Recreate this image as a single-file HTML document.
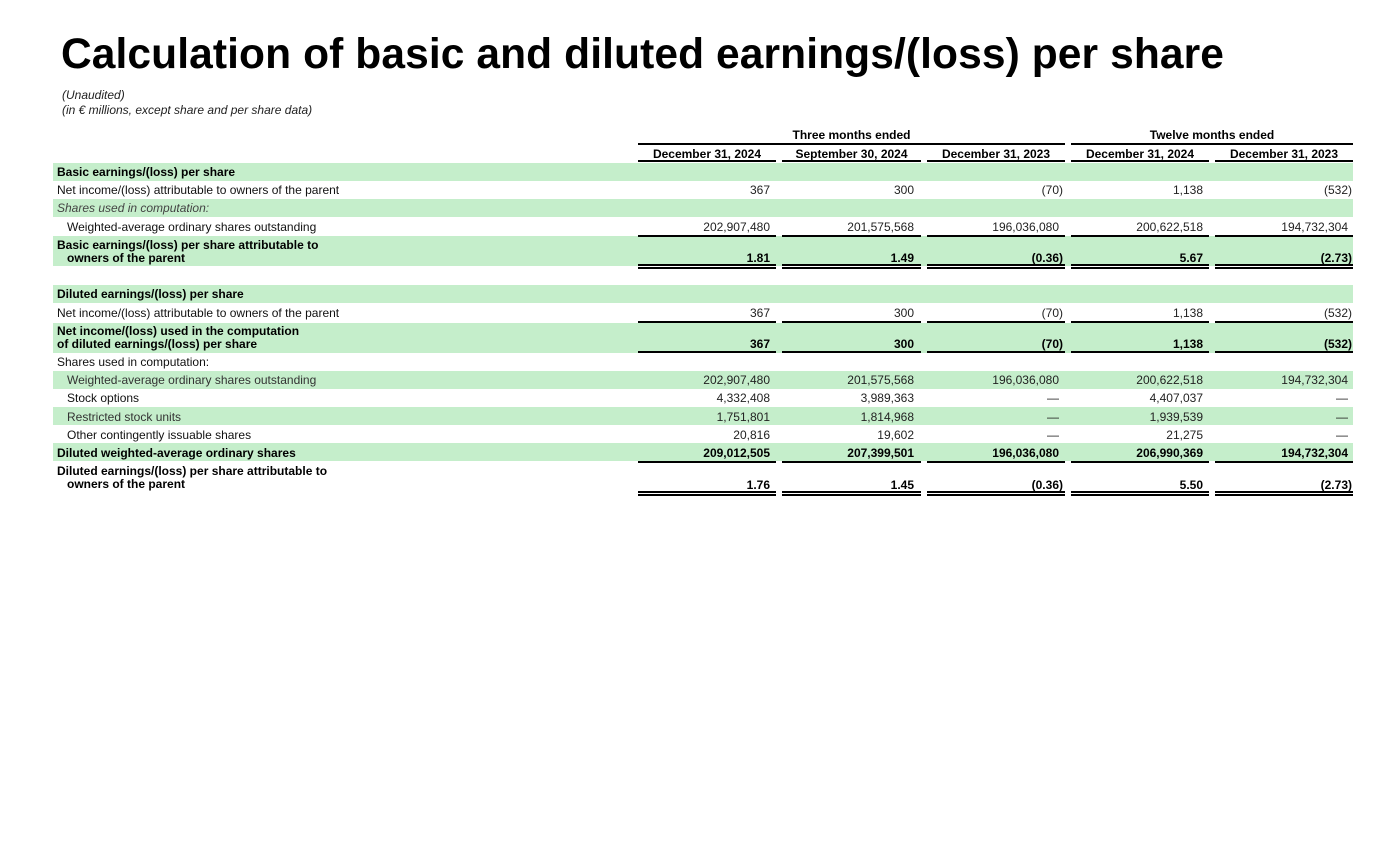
<!DOCTYPE html>
<html><head><meta charset="utf-8"><style>
body{margin:0;width:1398px;height:852px;background:#fff;position:relative;overflow:hidden;font-family:"Liberation Sans",Arial,sans-serif;color:#111}
h1{position:absolute;left:61px;top:31px;margin:0;font-size:42.5px;font-weight:bold;color:#000;letter-spacing:0.1px}
.sub{position:absolute;left:62px;font-size:12px;font-style:italic;color:#222}
.g{position:absolute;left:53px;width:1300px;background:#c5eecb}
.l{position:absolute;font-size:12px;line-height:13px;color:#111;white-space:nowrap}
.n{position:absolute;font-size:12px;line-height:13px;text-align:right;width:130px;color:#222;white-space:nowrap}
.b{font-weight:bold;color:#000}
.hr{position:absolute;height:2px;background:#000}
.hd{position:absolute;font-size:12px;font-weight:bold;text-align:center;color:#000}
</style></head><body>
<h1>Calculation of basic and diluted earnings/(loss) per share</h1>
<div class="sub" style="top:88px">(Unaudited)</div>
<div class="sub" style="top:103px">(in € millions, except share and per share data)</div>

<div class="hd" style="left:638px;width:427px;top:128px">Three months ended</div>
<div class="hd" style="left:1071px;width:282px;top:128px">Twelve months ended</div>
<div class="hr" style="left:638px;width:427px;top:143px"></div>
<div class="hr" style="left:1071px;width:282px;top:143px"></div>
<div class="hd" style="left:638px;width:138px;top:147px">December 31, 2024</div>
<div class="hd" style="left:782px;width:139px;top:147px">September 30, 2024</div>
<div class="hd" style="left:927px;width:138px;top:147px">December 31, 2023</div>
<div class="hd" style="left:1071px;width:138px;top:147px">December 31, 2024</div>
<div class="hd" style="left:1215px;width:138px;top:147px">December 31, 2023</div>
<div class="hr" style="left:638px;width:138px;top:160px"></div>
<div class="hr" style="left:782px;width:139px;top:160px"></div>
<div class="hr" style="left:927px;width:138px;top:160px"></div>
<div class="hr" style="left:1071px;width:138px;top:160px"></div>
<div class="hr" style="left:1215px;width:138px;top:160px"></div>

<div class="g" style="top:163px;height:18px"></div>
<div class="g" style="top:199px;height:18px"></div>
<div class="g" style="top:236px;height:30px"></div>
<div class="g" style="top:285px;height:18px"></div>
<div class="g" style="top:323px;height:30px"></div>
<div class="g" style="top:371px;height:18px"></div>
<div class="g" style="top:407px;height:18px"></div>
<div class="g" style="top:443px;height:18px"></div>

<div class="l b" style="left:57px;top:166px">Basic earnings/(loss) per share</div>
<div class="l" style="left:57px;top:184px">Net income/(loss) attributable to owners of the parent</div>
<div class="l" style="left:57px;top:202px;font-style:italic;color:#444">Shares used in computation:</div>
<div class="l" style="left:67px;top:221px">Weighted-average ordinary shares outstanding</div>
<div class="l b" style="left:57px;top:239px">Basic earnings/(loss) per share attributable to<br>&nbsp;&nbsp;&nbsp;owners of the parent</div>
<div class="l b" style="left:57px;top:288px">Diluted earnings/(loss) per share</div>
<div class="l" style="left:57px;top:307px">Net income/(loss) attributable to owners of the parent</div>
<div class="l b" style="left:57px;top:325px">Net income/(loss) used in the computation<br>of diluted earnings/(loss) per share</div>
<div class="l" style="left:57px;top:356px">Shares used in computation:</div>
<div class="l" style="left:67px;top:374px;color:#333">Weighted-average ordinary shares outstanding</div>
<div class="l" style="left:67px;top:392px">Stock options</div>
<div class="l" style="left:67px;top:411px;color:#333">Restricted stock units</div>
<div class="l" style="left:67px;top:429px">Other contingently issuable shares</div>
<div class="l b" style="left:57px;top:447px">Diluted weighted-average ordinary shares</div>
<div class="l b" style="left:57px;top:465px">Diluted earnings/(loss) per share attributable to<br>&nbsp;&nbsp;&nbsp;owners of the parent</div>

<div class="n" style="left:640px;top:184px">367</div><div class="n" style="left:784px;top:184px">300</div><div class="n" style="left:933px;top:184px">(70)</div><div class="n" style="left:1073px;top:184px">1,138</div><div class="n" style="left:1222px;top:184px">(532)</div>
<div class="n" style="left:640px;top:221px">202,907,480</div><div class="n" style="left:784px;top:221px">201,575,568</div><div class="n" style="left:929px;top:221px">196,036,080</div><div class="n" style="left:1073px;top:221px">200,622,518</div><div class="n" style="left:1218px;top:221px">194,732,304</div>
<div class="hr" style="left:638px;width:138px;top:235px"></div><div class="hr" style="left:782px;width:139px;top:235px"></div><div class="hr" style="left:927px;width:138px;top:235px"></div><div class="hr" style="left:1071px;width:138px;top:235px"></div><div class="hr" style="left:1215px;width:138px;top:235px"></div>
<div class="n b" style="left:640px;top:252px">1.81</div><div class="n b" style="left:784px;top:252px">1.49</div><div class="n b" style="left:933px;top:252px">(0.36)</div><div class="n b" style="left:1073px;top:252px">5.67</div><div class="n b" style="left:1222px;top:252px">(2.73)</div>
<div class="hr" style="left:638px;width:138px;top:264px"></div><div class="hr" style="left:782px;width:139px;top:264px"></div><div class="hr" style="left:927px;width:138px;top:264px"></div><div class="hr" style="left:1071px;width:138px;top:264px"></div><div class="hr" style="left:1215px;width:138px;top:264px"></div>
<div class="hr" style="left:638px;width:138px;top:267px"></div><div class="hr" style="left:782px;width:139px;top:267px"></div><div class="hr" style="left:927px;width:138px;top:267px"></div><div class="hr" style="left:1071px;width:138px;top:267px"></div><div class="hr" style="left:1215px;width:138px;top:267px"></div>

<div class="n" style="left:640px;top:307px">367</div><div class="n" style="left:784px;top:307px">300</div><div class="n" style="left:933px;top:307px">(70)</div><div class="n" style="left:1073px;top:307px">1,138</div><div class="n" style="left:1222px;top:307px">(532)</div>
<div class="hr" style="left:638px;width:138px;top:321px"></div><div class="hr" style="left:782px;width:139px;top:321px"></div><div class="hr" style="left:927px;width:138px;top:321px"></div><div class="hr" style="left:1071px;width:138px;top:321px"></div><div class="hr" style="left:1215px;width:138px;top:321px"></div>
<div class="n b" style="left:640px;top:338px">367</div><div class="n b" style="left:784px;top:338px">300</div><div class="n b" style="left:933px;top:338px">(70)</div><div class="n b" style="left:1073px;top:338px">1,138</div><div class="n b" style="left:1222px;top:338px">(532)</div>
<div class="hr" style="left:638px;width:138px;top:351px"></div><div class="hr" style="left:782px;width:139px;top:351px"></div><div class="hr" style="left:927px;width:138px;top:351px"></div><div class="hr" style="left:1071px;width:138px;top:351px"></div><div class="hr" style="left:1215px;width:138px;top:351px"></div>

<div class="n" style="left:640px;top:374px">202,907,480</div><div class="n" style="left:784px;top:374px">201,575,568</div><div class="n" style="left:929px;top:374px">196,036,080</div><div class="n" style="left:1073px;top:374px">200,622,518</div><div class="n" style="left:1218px;top:374px">194,732,304</div>
<div class="n" style="left:640px;top:392px">4,332,408</div><div class="n" style="left:784px;top:392px">3,989,363</div><div class="n" style="left:929px;top:392px">—</div><div class="n" style="left:1073px;top:392px">4,407,037</div><div class="n" style="left:1218px;top:392px">—</div>
<div class="n" style="left:640px;top:411px">1,751,801</div><div class="n" style="left:784px;top:411px">1,814,968</div><div class="n" style="left:929px;top:411px">—</div><div class="n" style="left:1073px;top:411px">1,939,539</div><div class="n" style="left:1218px;top:411px">—</div>
<div class="n" style="left:640px;top:429px">20,816</div><div class="n" style="left:784px;top:429px">19,602</div><div class="n" style="left:929px;top:429px">—</div><div class="n" style="left:1073px;top:429px">21,275</div><div class="n" style="left:1218px;top:429px">—</div>
<div class="n b" style="left:640px;top:447px">209,012,505</div><div class="n b" style="left:784px;top:447px">207,399,501</div><div class="n b" style="left:929px;top:447px">196,036,080</div><div class="n b" style="left:1073px;top:447px">206,990,369</div><div class="n b" style="left:1218px;top:447px">194,732,304</div>
<div class="hr" style="left:638px;width:138px;top:461px"></div><div class="hr" style="left:782px;width:139px;top:461px"></div><div class="hr" style="left:927px;width:138px;top:461px"></div><div class="hr" style="left:1071px;width:138px;top:461px"></div><div class="hr" style="left:1215px;width:138px;top:461px"></div>
<div class="n b" style="left:640px;top:479px">1.76</div><div class="n b" style="left:784px;top:479px">1.45</div><div class="n b" style="left:933px;top:479px">(0.36)</div><div class="n b" style="left:1073px;top:479px">5.50</div><div class="n b" style="left:1222px;top:479px">(2.73)</div>
<div class="hr" style="left:638px;width:138px;top:491px"></div><div class="hr" style="left:782px;width:139px;top:491px"></div><div class="hr" style="left:927px;width:138px;top:491px"></div><div class="hr" style="left:1071px;width:138px;top:491px"></div><div class="hr" style="left:1215px;width:138px;top:491px"></div>
<div class="hr" style="left:638px;width:138px;top:494px"></div><div class="hr" style="left:782px;width:139px;top:494px"></div><div class="hr" style="left:927px;width:138px;top:494px"></div><div class="hr" style="left:1071px;width:138px;top:494px"></div><div class="hr" style="left:1215px;width:138px;top:494px"></div>
</body></html>
